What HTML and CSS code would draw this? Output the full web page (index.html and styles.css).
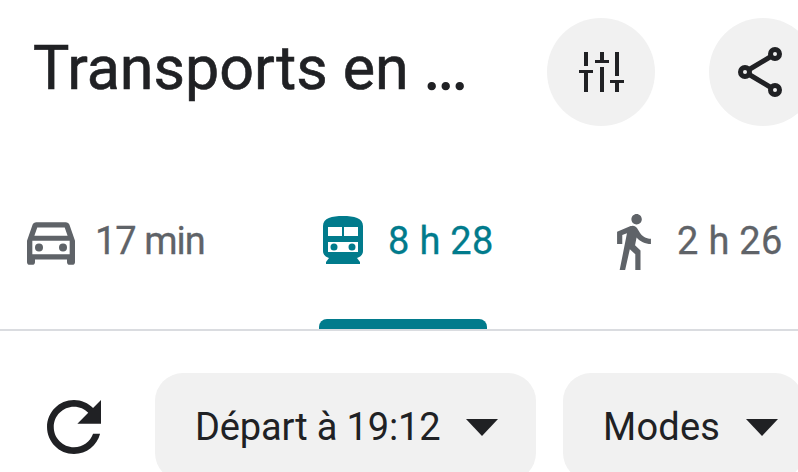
FILE: index.html
```html
<!DOCTYPE html>
<html lang="fr">
<head>
<meta charset="utf-8">
<title>Transports en commun</title>
<link rel="stylesheet" href="styles.css">
</head>
<body>
<div class="screen">
  <header class="header">
    <h1 class="title">Transports en <span class="title-dots">...</span></h1>
    <div class="round-btn">
      <svg class="icon-tune" viewBox="0 0 45 40"><path d="M5 0h4v14H5zM0 18h14v3H0zM5 21h4v19H5zM21 0h4v8h-4zM16 8h14v3H16zM21 15h4v25h-4zM36 0h4v24h-4zM31 28h14v3H31zM36 31h4v9h-4z"/></svg>
    </div>
    <div class="round-btn share">
      <svg class="icon-share" viewBox="0 0 44 50"><path class="share-line" d="M7 25L37 7M7 25L37 43"/><circle class="share-dot" cx="7" cy="25" r="4.500"/><circle class="share-dot" cx="37" cy="7" r="4.500"/><circle class="share-dot" cx="37" cy="43" r="4.500"/></svg>
    </div>
  </header>
  <nav class="tabs">
    <div class="tab tab-car">
      <svg class="icon-car" viewBox="3 5 18 16"><path d="M18.920 6.010C18.720 5.420 18.160 5 17.500 5h-11c-.66 0-1.210.42-1.420 1.010L3 12v8c0 .55.45 1 1 1h1c.55 0 1-.45 1-1v-1h12v1c0 .55.45 1 1 1h1c.55 0 1-.45 1-1v-8l-2.080-5.990zM6.850 7h10.290l1.080 3.110H5.770L6.850 7zM19 17H5v-5h14v5z"/><circle cx="7.500" cy="14.500" r="1.500"/><circle cx="16.500" cy="14.500" r="1.500"/></svg>
      <span class="tab-text tab-text-tight">17 min</span>
    </div>
    <div class="tab tab-transit">
      <svg class="icon-train" viewBox="0 0 40 48"><path fill-rule="evenodd" d="M20 0c11 0 20 2 20 10v25c0 3.500-2.500 6-6 7l3 4v2H3v-2l3-4c-3.500-1-6-3.500-6-7V10C0 2 9 0 20 0zM5 11v9h14V11zM21 11v9h14V11zM5 26v10h30V26zM11 27.500a3.500 3.500 0 1 1 0 7 3.500 3.500 0 0 1 0-7zM29 27.500a3.500 3.500 0 1 1 0 7 3.500 3.500 0 0 1 0-7z"/></svg>
      <span class="tab-text">8 h 28</span>
      <span class="indicator"></span>
    </div>
    <div class="tab tab-walk">
      <svg class="icon-walk" viewBox="6 1.500 13 21.500"><path d="M13.500 5.500c1.100 0 2-.9 2-2s-.9-2-2-2-2 .9-2 2 .9 2 2 2zM9.800 8.900L7 23h2.100l1.800-8 2.100 2v6h2v-7.500l-2.100-2 .6-3C14.800 12 16.800 13 19 13v-2c-1.900 0-3.500-1-4.300-2.400l-1-1.600c-.4-.6-1-1-1.700-1-.3 0-.5.1-.8.1L6 8.300V13h2V9.600l1.800-.7"/></svg>
      <span class="tab-text">2 h 26</span>
    </div>
  </nav>
  <section class="filters">
    <svg class="icon-refresh" viewBox="4 4 16 16"><path d="M17.650 6.350C16.200 4.900 14.210 4 12 4c-4.420 0-7.990 3.580-7.990 8s3.570 8 7.990 8c3.730 0 6.840-2.550 7.730-6h-2.080c-.82 2.330-3.040 4-5.650 4-3.310 0-6-2.690-6-6s2.690-6 6-6c1.660 0 3.140.69 4.220 1.780L13 11h7V4l-2.350 2.350z"/></svg>
    <div class="chip chip-depart"><span class="chip-text-tight">Départ à 19:12</span><i class="caret"></i></div>
    <div class="chip chip-modes"><span>Modes</span><i class="caret"></i></div>
  </section>
</div>
</body>
</html>
```
FILE: styles.css
```css
* { box-sizing: border-box; }
html, body { margin: 0; padding: 0; background: #fff; }
.screen {
  width: 798px;
  height: 472px;
  overflow: hidden;
  font-family: Roboto, "Noto Sans", sans-serif;
}
.header {
  display: flex;
  align-items: center;
  height: 144px;
  padding: 18px 0 18px 33px;
}
.title {
  margin: 0 0 8px;
  width: 514px;
  flex: none;
  font-size: 61px;
  line-height: 100px;
  font-weight: 400;
  color: #202124;
  white-space: nowrap;
  -webkit-text-stroke: 0.6px #202124;
}
.title-dots { letter-spacing: -2px; -webkit-text-stroke: 1.5px #202124; }
.round-btn {
  flex: none;
  width: 108px;
  height: 108px;
  border-radius: 50%;
  background: #f1f1f1;
  display: flex;
  align-items: center;
  justify-content: center;
}
.share { margin-left: 54px; }
.icon-tune { width: 45px; height: 40px; fill: #202124; }
.icon-share { width: 44px; height: 50px; margin-right: 6px; }
.share-line { stroke: #202124; stroke-width: 5; fill: none; }
.share-dot { fill: #f1f1f1; stroke: #202124; stroke-width: 5; }
.tabs {
  display: flex;
  height: 187px;
  border-bottom: 2px solid #dadce0;
}
.tab {
  position: relative;
  display: flex;
  align-items: center;
  flex: none;
  height: 185px;
  padding-top: 9px;
  font-size: 38px;
  color: #5f6368;
  -webkit-text-stroke: 0.3px currentColor;
}
.tab-car { width: 295px; padding-left: 27px; }
.tab-car .tab-text { margin-left: 20px; }
.tab-text-tight { letter-spacing: -1px; }
.icon-car { width: 48px; height: 43px; margin-top: 4px; fill: #5f6368; }
.tab-transit { width: 295px; padding-left: 28px; color: #017b8c; }
.tab-transit .tab-text { margin-left: 25px; letter-spacing: 0.3px; }
.icon-train { width: 40px; height: 48px; margin-top: -2px; fill: #017b8c; }
.indicator {
  position: absolute;
  left: 24px;
  bottom: 0;
  width: 168px;
  height: 10px;
  border-radius: 8px 8px 0 0;
  background: #017b8c;
}
.tab-walk { flex: 1; padding-left: 27px; }
.tab-walk .tab-text { margin-left: 26px; letter-spacing: 0.3px; white-space: nowrap; }
.icon-walk { width: 34px; height: 56px; margin-top: 2px; fill: #5f6368; flex: none; }
.filters {
  display: flex;
  align-items: flex-start;
  padding-top: 42px;
}
.icon-refresh { flex: none; width: 54px; height: 54px; margin: 27px 0 0 47px; fill: #202124; }
.chip {
  flex: none;
  display: flex;
  align-items: center;
  height: 108px;
  border-radius: 28px;
  background: #f1f1f1;
  font-size: 38px;
  color: #202124;
}
.chip-depart { width: 381px; margin-left: 54px; padding-left: 40px; }
.chip-text-tight { letter-spacing: -0.15px; }
.chip-modes { width: 240px; margin-left: 27px; padding-left: 40px; }
.chip-modes span { letter-spacing: 0.2px; }
.caret {
  width: 0;
  height: 0;
  margin-left: 26px;
  border-left: 16px solid transparent;
  border-right: 16px solid transparent;
  border-top: 17px solid #202124;
}
```
